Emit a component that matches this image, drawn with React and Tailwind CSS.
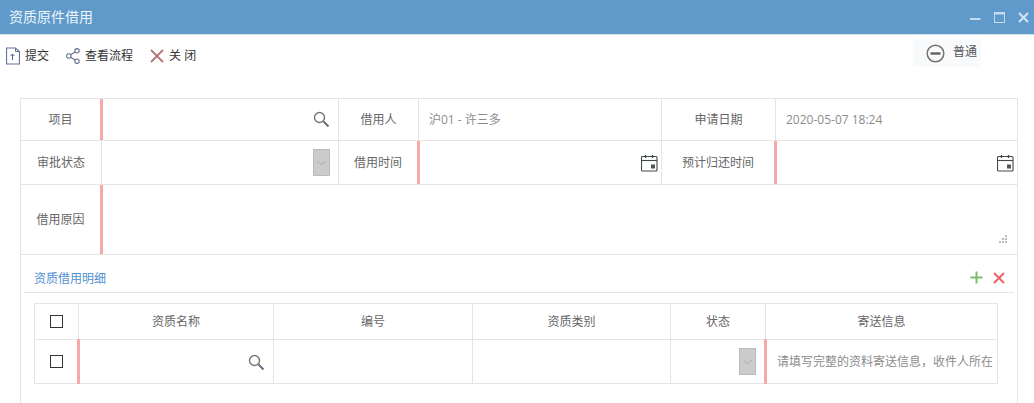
import React from 'react';

const SearchIcon = () => (
    <svg width="17" height="17" viewBox="0 0 17 17" fill="none">
        <circle cx="6.5" cy="6.5" r="5" stroke="#7a746a" strokeWidth="1.4" />
        <path d="M10.5 10.5L15.5 15.5" stroke="#5f6f7c" strokeWidth="2" />
    </svg>
);

const CalendarIcon = () => (
    <svg width="17" height="18" viewBox="0 0 17 18" fill="none">
        <rect x="0.5" y="2.5" width="15.5" height="14.5" rx="1" stroke="#3f4a4c" strokeWidth="1.1" />
        <path d="M0.5 6.5H16" stroke="#3f4a4c" strokeWidth="1.1" />
        <path d="M4.5 1V4M11.5 1V4" stroke="#3f4a4c" strokeWidth="1.4" />
        <rect x="10" y="10.5" width="4" height="4" fill="#555" />
    </svg>
);

const SelectArrow = () => (
    <div className="w-[17px] h-[27px] bg-[#cbcbcb] border border-[#bbbbbb] flex items-center justify-center">
        <svg width="9" height="6" viewBox="0 0 9 6" fill="none">
            <path d="M0.5 1L4.5 5L8.5 1" stroke="#aaaaaa" strokeWidth="1" />
        </svg>
    </div>
);

const Checkbox = () => <div className="w-[13px] h-[13px] border border-[#333333] bg-white" />;

const Label = ({ width, children }) => (
    <div className={`${width} shrink-0 flex items-center justify-center text-[#666666] border-r border-[#e5e5e5]`}>
        {children}
    </div>
);

const App = () => {
    return (
        <div
            className="w-[1034px] h-[403px] overflow-hidden bg-white text-xs text-[#666666]"
            style={{ fontFamily: '"Open Sans", "Noto Sans CJK SC", sans-serif' }}
        >
            {/* Title bar */}
            <div className="h-[35px] bg-[#5f9acb] border-b border-[#d6e4f0] flex items-center justify-between pl-[9px] pr-[5px]">
                <span className="text-sm text-[#eef5fb]">资质原件借用</span>
                <div className="flex items-center gap-[13px]">
                    <svg width="11" height="11" viewBox="0 0 11 11"><path d="M0 7H10.5" stroke="#c5dcee" strokeWidth="2" /></svg>
                    <svg width="11" height="11" viewBox="0 0 11 11" fill="none">
                        <rect x="0.5" y="0.5" width="10" height="10" stroke="#c5dcee" />
                        <path d="M0 1.5H11" stroke="#c5dcee" strokeWidth="2" />
                    </svg>
                    <svg width="11" height="11" viewBox="0 0 11 11"><path d="M1 1L10 10M10 1L1 10" stroke="#cfe2f1" strokeWidth="2.2" /></svg>
                </div>
            </div>

            {/* Toolbar */}
            <div className="relative h-[63px] pl-[6px] pt-[12px] flex items-start text-[#333333]">
                <div className="flex items-center gap-[5px] h-[18px]">
                    <svg width="14" height="18" viewBox="0 0 14 18" fill="none">
                        <path d="M0.5 1H9.5L13.5 4.5V17H0.5Z" stroke="#65719e" strokeWidth="1.2" />
                        <path d="M9.5 1V4.5H13.5" stroke="#65719e" strokeWidth="1" />
                        <path d="M6.5 13V7M4.5 9L6.5 7L8.5 9" stroke="#55608a" strokeWidth="1" />
                    </svg>
                    <span>提交</span>
                </div>
                <div className="flex items-center gap-[5px] h-[18px] ml-[17px]">
                    <svg width="14" height="16" viewBox="0 0 14 16" fill="none" stroke="#65718e" strokeWidth="1.1">
                        <circle cx="11" cy="2.8" r="2.2" />
                        <circle cx="2.8" cy="8" r="2.2" />
                        <circle cx="11" cy="13.2" r="2.2" />
                        <path d="M4.7 6.8L9.1 4M4.7 9.2L9.1 12" />
                    </svg>
                    <span>查看流程</span>
                </div>
                <div className="flex items-center gap-[5px] h-[18px] ml-[17px]">
                    <svg width="14" height="14" viewBox="0 0 14 14"><path d="M1 1L13 13M13 1L1 13" stroke="#b5747a" strokeWidth="1.8" /></svg>
                    <span>关 闭</span>
                </div>
                <div className="absolute left-[913px] top-[4px] w-[68px] h-[28px] bg-[#f9fafc] flex items-center pl-[13px] gap-[8px] text-[#555555]">
                    <svg width="19" height="19" viewBox="0 0 19 19" fill="none">
                        <circle cx="9.5" cy="9.5" r="8.3" stroke="#75726f" strokeWidth="1.5" />
                        <path d="M4.5 9.5H14.5" stroke="#5f5f5f" strokeWidth="2.4" />
                    </svg>
                    <span className="-mt-[2px]">普通</span>
                </div>
            </div>

            {/* Form */}
            <div className="ml-[20px] w-[998px] h-[305px] border-x border-t border-[#e5e5e5]">
                <div className="flex h-[42px] border-b border-[#e5e5e5]">
                    <div className="w-[79px] shrink-0 flex items-center justify-center">项目</div>
                    <div className="w-[239px] shrink-0 border-l-[3px] border-l-[#f7a8a8] border-r border-r-[#e5e5e5] flex items-center justify-end pr-[8px]">
                        <SearchIcon />
                    </div>
                    <Label width="w-[80px]">借用人</Label>
                    <div className="w-[243px] shrink-0 border-r border-[#e5e5e5] flex items-center pl-[10px] text-[#8c8c8c]">沪01 - 许三多</div>
                    <Label width="w-[114px]">申请日期</Label>
                    <div className="flex-1 flex items-center pl-[10px] text-[#8c8c8c]">2020-05-07 18:24</div>
                </div>
                <div className="flex h-[44px] border-b border-[#e5e5e5]">
                    <Label width="w-[81px]">审批状态</Label>
                    <div className="w-[237px] shrink-0 border-r border-[#e5e5e5] flex items-center justify-end pr-[8px]">
                        <SelectArrow />
                    </div>
                    <div className="w-[78px] shrink-0 flex items-center justify-center text-[#666666]">借用时间</div>
                    <div className="w-[245px] shrink-0 border-l-[3px] border-l-[#f7a8a8] border-r border-r-[#e5e5e5] flex items-center justify-end pr-[3px]">
                        <CalendarIcon />
                    </div>
                    <div className="w-[112px] shrink-0 flex items-center justify-center text-[#666666]">预计归还时间</div>
                    <div className="flex-1 border-l-[3px] border-l-[#f7a8a8] flex items-center justify-end pr-[3px]">
                        <CalendarIcon />
                    </div>
                </div>
                <div className="flex h-[70px] border-b border-[#e5e5e5]">
                    <div className="w-[79px] shrink-0 flex items-center justify-center">借用原因</div>
                    <div className="relative flex-1 border-l-[3px] border-l-[#f7a8a8]">
                        <svg className="absolute right-[10px] bottom-[11px]" width="8" height="8" viewBox="0 0 8 8" fill="#bbbbbb">
                            <rect x="6" y="0" width="2" height="2" />
                            <rect x="3" y="3" width="2" height="2" />
                            <rect x="6" y="3" width="2" height="2" />
                            <rect x="0" y="6" width="2" height="2" />
                            <rect x="3" y="6" width="2" height="2" />
                            <rect x="6" y="6" width="2" height="2" />
                        </svg>
                    </div>
                </div>

                {/* Detail section */}
                <div className="ml-[3px] mr-[3px] h-[38px] border-b border-[#e5e5e5] flex items-end justify-between pl-[10px] pr-[9px] pb-[5px]">
                    <span className="text-[#4f8fcf]">资质借用明细</span>
                    <div className="flex items-center gap-[10px] pb-[3px]">
                        <svg width="13" height="13" viewBox="0 0 13 13"><path d="M6.5 0.5V12.5M0.5 6.5H12.5" stroke="#7dbb6a" strokeWidth="2" /></svg>
                        <svg width="12" height="12" viewBox="0 0 12 12"><path d="M1 1L11 11M11 1L1 11" stroke="#f0626a" strokeWidth="2" /></svg>
                    </div>
                </div>

                <table className="ml-[13px] mt-[10px] w-[963px] table-fixed border-collapse">
                    <colgroup>
                        <col className="w-[44px]" />
                        <col className="w-[195px]" />
                        <col className="w-[199px]" />
                        <col className="w-[198px]" />
                        <col className="w-[95px]" />
                        <col className="w-[232px]" />
                    </colgroup>
                    <thead>
                        <tr className="h-[36px]">
                            <th className="border border-[#e5e5e5] font-normal"><div className="flex justify-center"><Checkbox /></div></th>
                            <th className="border border-[#e5e5e5] font-normal">资质名称</th>
                            <th className="border border-[#e5e5e5] font-normal">编号</th>
                            <th className="border border-[#e5e5e5] font-normal">资质类别</th>
                            <th className="border border-[#e5e5e5] font-normal">状态</th>
                            <th className="border border-[#e5e5e5] font-normal">寄送信息</th>
                        </tr>
                    </thead>
                    <tbody>
                        <tr className="h-[44px]">
                            <td className="border border-[#e5e5e5]"><div className="flex justify-center"><Checkbox /></div></td>
                            <td className="border border-[#e5e5e5] border-l-[3px] border-l-[#f7a8a8]">
                                <div className="flex justify-end pr-[8px] pt-[2px]"><SearchIcon /></div>
                            </td>
                            <td className="border border-[#e5e5e5]"></td>
                            <td className="border border-[#e5e5e5]"></td>
                            <td className="border border-[#e5e5e5]">
                                <div className="flex justify-end pr-[8px]"><SelectArrow /></div>
                            </td>
                            <td className="border border-[#e5e5e5] border-l-[3px] border-l-[#f7a8a8] pl-[10px] text-[#8c8c8c]">
                                <div className="whitespace-nowrap">请填写完整的资料寄送信息，收件人所在</div>
                            </td>
                        </tr>
                    </tbody>
                </table>
            </div>
        </div>
    );
};

export default App;
